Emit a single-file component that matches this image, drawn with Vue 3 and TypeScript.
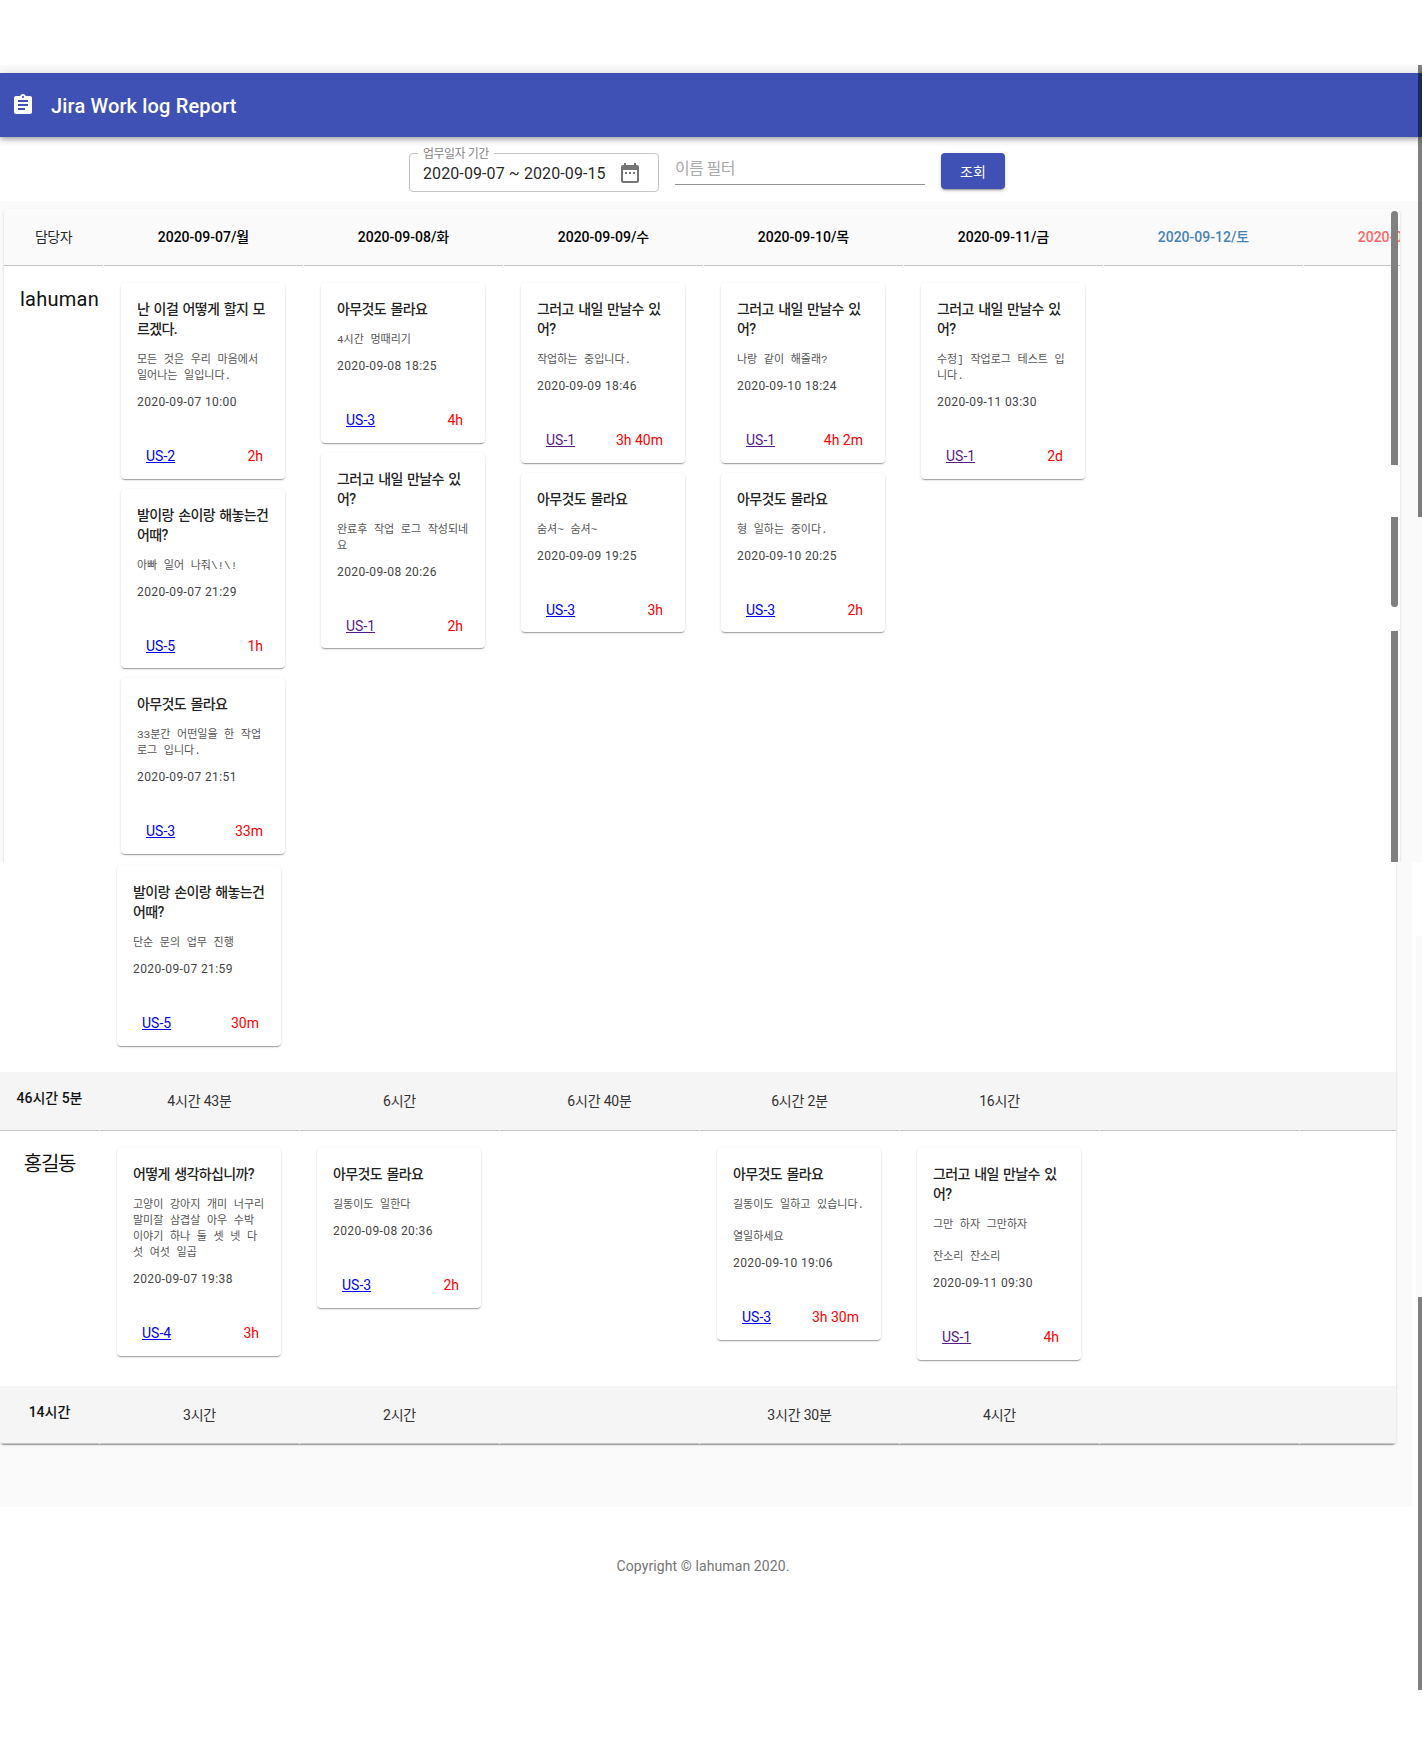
<script setup lang="ts">
interface Log { title: string; desc: string; date: string; key: string; time: string; visited?: boolean }

const headers = [
  { label: '2020-09-07/월', tone: '' },
  { label: '2020-09-08/화', tone: '' },
  { label: '2020-09-09/수', tone: '' },
  { label: '2020-09-10/목', tone: '' },
  { label: '2020-09-11/금', tone: '' },
  { label: '2020-09-12/토', tone: 'sat' },
  { label: '2020-09-13/일', tone: 'sun' },
]
const askTomorrow = '그러고 내일 만날수 있어?'
const nothing = '아무것도 몰라요'
const feet = '발이랑 손이랑 해놓는건 어때?'

const upperDays: Log[][] = [
  [
    { title: '난 이걸 어떻게 할지 모르겠다.', desc: '모든 것은 우리 마음에서 일어나는 일입니다.', date: '2020-09-07 10:00', key: 'US-2', time: '2h' },
    { title: feet, desc: '아빠 일어 나줘\\!\\!', date: '2020-09-07 21:29', key: 'US-5', time: '1h' },
    { title: nothing, desc: '33분간 어떤일을 한 작업 로그 입니다.', date: '2020-09-07 21:51', key: 'US-3', time: '33m' },
  ],
  [
    { title: nothing, desc: '4시간 멍때리기', date: '2020-09-08 18:25', key: 'US-3', time: '4h' },
    { title: askTomorrow, desc: '완료후 작업 로그 작성되네요', date: '2020-09-08 20:26', key: 'US-1', time: '2h', visited: true },
  ],
  [
    { title: askTomorrow, desc: '작업하는 중입니다.', date: '2020-09-09 18:46', key: 'US-1', time: '3h 40m', visited: true },
    { title: nothing, desc: '숨셔~ 숨셔~', date: '2020-09-09 19:25', key: 'US-3', time: '3h' },
  ],
  [
    { title: askTomorrow, desc: '나랑 같이 해줄래?', date: '2020-09-10 18:24', key: 'US-1', time: '4h 2m', visited: true },
    { title: nothing, desc: '형 일하는 중이다.', date: '2020-09-10 20:25', key: 'US-3', time: '2h' },
  ],
  [
    { title: askTomorrow, desc: '수정] 작업로그 테스트 입니다.', date: '2020-09-11 03:30', key: 'US-1', time: '2d', visited: true },
  ],
  [],
  [],
]

const lowerFirst: Log[][] = [
  [{ title: feet, desc: '단순 문의 업무 진행', date: '2020-09-07 21:59', key: 'US-5', time: '30m' }],
  [], [], [], [], [], [],
]
const totalsOne = ['4시간 43분', '6시간', '6시간 40분', '6시간 2분', '16시간', '', '']
const gildong: Log[][] = [
  [{ title: '어떻게 생각하십니까?', desc: '고양이 강아지 개미 너구리 말미잘 삼겹살 아우 수박 이야기 하나 둘 셋 넷 다섯 여섯 일곱', date: '2020-09-07 19:38', key: 'US-4', time: '3h' }],
  [{ title: nothing, desc: '길동이도 일한다', date: '2020-09-08 20:36', key: 'US-3', time: '2h' }],
  [],
  [{ title: nothing, desc: '길동이도 일하고 있습니다.\n\n열일하세요', date: '2020-09-10 19:06', key: 'US-3', time: '3h 30m' }],
  [{ title: askTomorrow, desc: '그만 하자 그만하자\n\n잔소리 잔소리', date: '2020-09-11 09:30', key: 'US-1', time: '4h', visited: true }],
  [], [],
]
const totalsTwo = ['3시간', '2시간', '', '3시간 30분', '4시간', '', '']
</script>

<template>
  <div class="page">
    <section class="tile-top">
      <div class="top-gap"></div>
      <div class="top-strip"></div>
      <header class="appbar">
        <svg class="appbar-icon" viewBox="0 0 24 24" width="24" height="24">
          <path fill="#fff" d="M19 3h-4.18C14.4 1.84 13.3 1 12 1c-1.3 0-2.4.84-2.82 2H5c-1.1 0-2 .9-2 2v14c0 1.1.9 2 2 2h14c1.1 0 2-.9 2-2V5c0-1.1-.9-2-2-2zm-7 0c.55 0 1 .45 1 1s-.45 1-1 1-1-.45-1-1 .45-1 1-1zm2 14H7v-2h7v2zm3-4H7v-2h10v2zm0-4H7V7h10v2z" />
        </svg>
        <h1 class="appbar-title">Jira Work log Report</h1>
      </header>

      <div class="filters">
        <div class="range">
          <span class="range-label">업무일자 기간</span>
          <span class="range-value">2020-09-07 ~ 2020-09-15</span>
          <svg viewBox="0 0 24 24" width="24" height="24">
            <path fill="rgba(0,0,0,.54)" d="M9 11H7v2h2v-2zm4 0h-2v2h2v-2zm4 0h-2v2h2v-2zm2-7h-1V2h-2v2H8V2H6v2H5c-1.11 0-1.99.9-1.99 2L3 20c0 1.1.89 2 2 2h14c1.1 0 2-.9 2-2V6c0-1.1-.9-2-2-2zm0 16H5V9h14v11z" />
          </svg>
        </div>
        <input class="name" type="text" placeholder="이름 필터" />
        <button class="search" type="button">조회</button>
      </div>

      <div class="main main-top">
        <div class="table table-top">
          <div class="grid head">
            <div class="head-cell owner">담당자</div>
            <div v-for="h in headers" :key="h.label" class="head-cell" :class="h.tone">{{ h.label }}</div>
          </div>
          <div class="grid body-row upper-row">
            <div class="user latin">lahuman</div>
            <div v-for="(day, i) in upperDays" :key="i" class="day">
              <article v-for="log in day" :key="log.date" class="card">
                <div class="card-content">
                  <h2 class="card-title">{{ log.title }}</h2>
                  <pre class="card-desc">{{ log.desc }}</pre>
                  <p class="card-date">{{ log.date }}</p>
                </div>
                <div class="card-actions">
                  <a class="issue" :class="{ visited: log.visited }" href="#">{{ log.key }}</a>
                  <span class="spent">{{ log.time }}</span>
                </div>
              </article>
            </div>
          </div>
        </div>
      </div>

      <i class="inner-thumb thumb-a"></i>
      <i class="inner-thumb thumb-b"></i>
      <i class="inner-thumb thumb-c"></i>
      <i class="page-thumb"></i>
    </section>

    <section class="tile-bottom">
      <div class="bottom-left">
        <div class="main main-bottom">
          <div class="table table-bottom">
            <div class="grid body-row first-rest">
              <div></div>
              <div v-for="(day, i) in lowerFirst" :key="i" class="day">
                <article v-for="log in day" :key="log.date" class="card">
                  <div class="card-content">
                    <h2 class="card-title">{{ log.title }}</h2>
                    <pre class="card-desc">{{ log.desc }}</pre>
                    <p class="card-date">{{ log.date }}</p>
                  </div>
                  <div class="card-actions">
                    <a class="issue" :class="{ visited: log.visited }" href="#">{{ log.key }}</a>
                    <span class="spent">{{ log.time }}</span>
                  </div>
                </article>
              </div>
            </div>
            <div class="grid totals tall">
              <div class="total-cell grand">46시간 5분</div>
              <div v-for="(t, i) in totalsOne" :key="i" class="total-cell">{{ t }}</div>
            </div>
            <div class="grid body-row second">
              <div class="user korean">홍길동</div>
              <div v-for="(day, i) in gildong" :key="i" class="day">
                <article v-for="log in day" :key="log.date" class="card">
                  <div class="card-content">
                    <h2 class="card-title">{{ log.title }}</h2>
                    <pre class="card-desc">{{ log.desc }}</pre>
                    <p class="card-date">{{ log.date }}</p>
                  </div>
                  <div class="card-actions">
                    <a class="issue" :class="{ visited: log.visited }" href="#">{{ log.key }}</a>
                    <span class="spent">{{ log.time }}</span>
                  </div>
                </article>
              </div>
            </div>
            <div class="grid totals">
              <div class="total-cell grand">14시간</div>
              <div v-for="(t, i) in totalsTwo" :key="i" class="total-cell">{{ t }}</div>
            </div>
          </div>
        </div>
        <footer class="copyright">Copyright © lahuman 2020.</footer>
      </div>
      <div class="rail">
        <div class="rail-strip"></div>
        <div class="rail-thumb"></div>
      </div>
    </section>
  </div>
</template>

<style>
html, body { margin: 0; background: #fff; }
</style>

<style scoped>
.page {
  width: 1422px;
  height: 1751px;
  overflow: hidden;
  background: #fff;
  font-family: Roboto, "Noto Sans CJK KR", sans-serif;
  color: rgba(0, 0, 0, .87);
}
.tile-top {
  position: relative;
  height: 862px;
  overflow: hidden;
  display: flex;
  flex-direction: column;
}
.top-gap { height: 65px; flex: none; }
.top-strip { height: 8px; flex: none; background: #fafafa; }
.appbar {
  position: relative;
  z-index: 2;
  flex: none;
  height: 64px;
  display: flex;
  align-items: center;
  padding-left: 11px;
  background: #3f51b5;
  color: #fff;
  box-shadow: 0 2px 4px -1px rgba(0,0,0,.2), 0 4px 5px 0 rgba(0,0,0,.14), 0 1px 10px 0 rgba(0,0,0,.12);
}
.appbar-icon { flex: none; }
.appbar-title {
  margin: 1px 0 0 16px;
  font-size: 20px;
  line-height: 32px;
  font-weight: 500;
  letter-spacing: .15px;
}
.filters {
  flex: none;
  height: 64px;
  box-sizing: border-box;
  padding: 16px 8px 0 0;
  display: flex;
  justify-content: center;
  align-items: flex-start;
  gap: 16px;
  background: #fff;
}
.range {
  position: relative;
  width: 250px;
  height: 39px;
  box-sizing: border-box;
  border: 1px solid #c4c4c4;
  border-radius: 4px;
  display: flex;
  align-items: center;
  justify-content: space-between;
  padding: 0 16px 0 13px;
}
.range-label {
  position: absolute;
  left: 8px;
  top: -8px;
  padding: 0 5px;
  background: #fff;
  font-size: 12px;
  line-height: 16px;
  letter-spacing: -.5px;
  color: rgba(0,0,0,.54);
}
.range-value { font-size: 16px; line-height: 24px; padding-top: 2px; letter-spacing: .1px; }
.name {
  width: 250px;
  height: 32px;
  box-sizing: border-box;
  padding: 0;
  border: 0;
  border-bottom: 1px solid #949494;
  outline: none;
  background: transparent;
  font: 16px Roboto, "Noto Sans CJK KR", sans-serif;
  letter-spacing: -.6px;
}
.name::placeholder { color: #a9a9a9; opacity: 1; }
.search {
  width: 64px;
  height: 36px;
  padding: 0;
  border: 0;
  border-radius: 4px;
  background: #3f51b5;
  color: #fff;
  font: 400 14px Roboto, "Noto Sans CJK KR", sans-serif;
  box-shadow: 0 3px 1px -2px rgba(0,0,0,.2), 0 2px 2px 0 rgba(0,0,0,.14), 0 1px 5px 0 rgba(0,0,0,.12);
}
.main { background: #fafafa; }
.main-top {
  flex: 1;
  min-height: 0;
  padding: 8px 22px 0 4px;
}
.table {
  background: #fff;
  overflow: hidden;
  border-radius: 4px;
  box-shadow: 0 2px 1px -1px rgba(0,0,0,.2), 0 1px 1px 0 rgba(0,0,0,.14), 0 1px 3px 0 rgba(0,0,0,.12);
}
.table-top { width: 1396px; height: 700px; }
.table-bottom { width: 1396px; border-radius: 0 0 4px 4px; }
.main-bottom { padding-bottom: 63px; }
.grid {
  display: grid;
  grid-template-columns: 99px repeat(7, 199px);
  column-gap: 1px;
  width: 1499px;
}
.head { background: #fafafa; }
.head-cell {
  height: 54px;
  padding-bottom: 2px;
  border-bottom: 1px solid #c4c4c4;
  background: #fafafa;
  display: flex;
  align-items: center;
  justify-content: center;
  font-size: 14px;
  font-weight: 500;
  white-space: nowrap;
  color: #000;
}
.head-cell.owner { font-weight: 400; color: rgba(0,0,0,.87); letter-spacing: -.6px; }
.head-cell.sat { color: #4682b4; }
.head-cell.sun { color: #f66; }
.user {
  padding: 17px 16px 0;
  font-size: 20px;
  line-height: 32px;
  text-align: center;
  color: #111;
}
.user.latin { letter-spacing: .25px; }
.user.korean { letter-spacing: -1.2px; }
.day {
  padding: 17px 18px 0 17px;
  display: flex;
  flex-direction: column;
  align-items: flex-start;
  gap: 10px;
}
.first-rest .day { padding-top: 4px; padding-bottom: 26px; }
.second .day { padding-bottom: 26.5px; }
.card {
  width: 164px;
  background: #fff;
  border-radius: 4px;
  box-shadow: 0 2px 1px -1px rgba(0,0,0,.2), 0 1px 1px 0 rgba(0,0,0,.14), 0 1px 3px 0 rgba(0,0,0,.12);
}
.card-content { padding: 16px 16px 24px; }
.card-title {
  margin: 0 0 13px;
  font-size: 14px;
  line-height: 20px;
  font-weight: 500;
  letter-spacing: -.62px;
  word-spacing: 1.5px;
  color: #222;
}
.card-desc {
  margin: 0 0 8px;
  font-family: "Liberation Mono", "Noto Sans CJK KR", monospace;
  font-size: 11px;
  line-height: 16px;
  white-space: pre-wrap;
  color: #555;
}
.card-date {
  margin: 0;
  font-size: 12px;
  line-height: 20px;
  letter-spacing: .4px;
  color: #444;
}
.card-actions {
  height: 26px;
  margin: 0 8px;
  padding: 7px 14px 9.5px 17px;
  display: flex;
  justify-content: space-between;
  align-items: center;
  font-size: 14px;
  line-height: 20px;
}
.issue { color: #00e; }
.issue.visited { color: #551a8b; }
.spent { color: #f00; }
.totals { background: #f5f5f5; }
.total-cell {
  height: 56px;
  padding-bottom: 1px;
  border-bottom: 1px solid #c4c4c4;
  background: #f5f5f5;
  display: flex;
  align-items: center;
  justify-content: center;
  font-size: 14px;
  letter-spacing: -.2px;
  color: #333;
  white-space: nowrap;
}
.tall .total-cell { padding-bottom: 2.5px; }
.total-cell.grand {
  align-items: flex-start;
  height: 35px;
  padding-bottom: 22px;
  line-height: 52px;
  font-weight: 500;
  letter-spacing: 0;
  color: #111;
}
.tall .total-cell.grand { padding-bottom: 23.5px; }
.inner-thumb {
  position: absolute;
  left: 1391px;
  width: 7px;
  background: #808080;
}
.thumb-a { top: 211px; height: 254px; border-radius: 4px 4px 0 0; }
.thumb-b { top: 517px; height: 90px; border-radius: 0 0 4px 4px; }
.thumb-c { top: 631px; height: 231px; }
.page-thumb {
  position: absolute;
  z-index: 3;
  left: 1417.7px;
  right: 0;
  top: 65px;
  height: 452px;
  background: rgba(0,0,0,.5);
}
.tile-bottom { display: flex; align-items: flex-start; height: 889px; }
.bottom-left { width: 1412px; flex: none; }
.copyright {
  padding: 49px 6px 0 0;
  text-align: center;
  font-size: 14px;
  line-height: 20px;
  color: #757575;
  letter-spacing: .1px;
}
.rail {
  margin: 74px 0 0 4px;
  width: 6px;
  display: flex;
  flex-direction: column;
  align-items: flex-end;
}
.rail-strip { width: 100%; height: 361px; background: #fafafa; }
.rail-thumb { width: 4.3px; height: 393px; background: #808080; }
</style>
